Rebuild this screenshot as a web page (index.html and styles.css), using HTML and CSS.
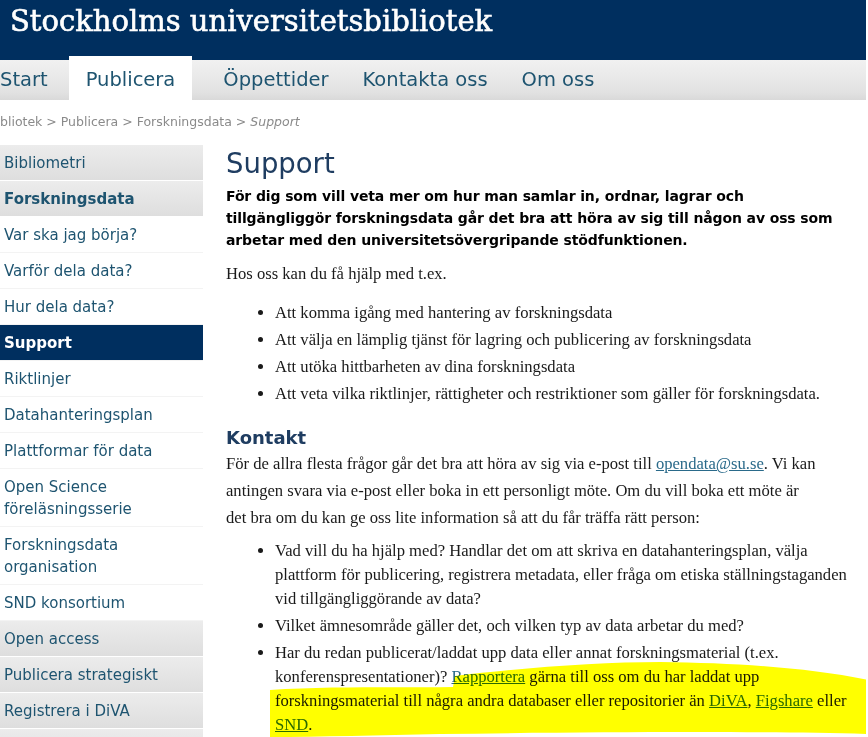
FILE: index.html
```html
<!DOCTYPE html>
<html lang="sv">

<head>
    <meta charset="UTF-8">
    <meta name="viewport" content="width=device-width, initial-scale=1.0">
    <title>Support - Stockholms universitetsbibliotek</title>
    <link rel="stylesheet" href="styles.css">
</head>

<body>
    <div class="page">
        <header class="masthead">
            <div class="site-title">Stockholms universitetsbibliotek</div>
        </header>

        <nav class="topnav">
            <a href="#" class="topnav-item">Start</a>
            <a href="#" class="topnav-item current">Publicera</a>
            <a href="#" class="topnav-item">Öppettider</a>
            <a href="#" class="topnav-item">Kontakta oss</a>
            <a href="#" class="topnav-item">Om oss</a>
        </nav>

        <div class="crumbs">
            <a href="#">bliotek</a> &gt; <a href="#">Publicera</a> &gt; <a href="#">Forskningsdata</a> &gt; <em>Support</em>
        </div>

        <div class="layout">
            <aside class="sidenav">
                <a href="#" class="side-item top">Bibliometri</a>
                <a href="#" class="side-item top open">Forskningsdata</a>
                <a href="#" class="side-item">Var ska jag börja?</a>
                <a href="#" class="side-item">Varför dela data?</a>
                <a href="#" class="side-item">Hur dela data?</a>
                <a href="#" class="side-item active">Support</a>
                <a href="#" class="side-item">Riktlinjer</a>
                <a href="#" class="side-item">Datahanteringsplan</a>
                <a href="#" class="side-item">Plattformar för data</a>
                <a href="#" class="side-item">Open Science föreläsningsserie</a>
                <a href="#" class="side-item">Forskningsdata organisation</a>
                <a href="#" class="side-item">SND konsortium</a>
                <a href="#" class="side-item top">Open access</a>
                <a href="#" class="side-item top">Publicera strategiskt</a>
                <a href="#" class="side-item top">Registrera i DiVA</a>
                <a href="#" class="side-item top">Upphovsrätt</a>
            </aside>

            <main class="content">
                <h1>Support</h1>
                <p class="lead">För dig som vill veta mer om hur man samlar in, ordnar, lagrar och<br>tillgängliggör forskningsdata går det bra att höra av sig till någon av oss som<br>arbetar med den universitetsövergripande stödfunktionen.</p>

                <p>Hos oss kan du få hjälp med t.ex.</p>
                <ul>
                    <li>Att komma igång med hantering av forskningsdata</li>
                    <li>Att välja en lämplig tjänst för lagring och publicering av forskningsdata</li>
                    <li>Att utöka hittbarheten av dina forskningsdata</li>
                    <li>Att veta vilka riktlinjer, rättigheter och restriktioner som gäller för forskningsdata.</li>
                </ul>

                <h2>Kontakt</h2>
                <p>För de allra flesta frågor går det bra att höra av sig via e-post till <a href="#">opendata@su.se</a>. Vi kan<br>antingen svara via e-post eller boka in ett personligt möte. Om du vill boka ett möte är<br>det bra om du kan ge oss lite information så att du får träffa rätt person:</p>
                <ul class="questions">
                    <li>Vad vill du ha hjälp med? Handlar det om att skriva en datahanteringsplan, välja<br>plattform för publicering, registrera metadata, eller fråga om etiska ställningstaganden<br>vid tillgängliggörande av data?</li>
                    <li>Vilket ämnesområde gäller det, och vilken typ av data arbetar du med?</li>
                    <li>Har du redan publicerat/laddat upp data eller annat forskningsmaterial (t.ex.<br>konferenspresentationer)? <a href="#">Rapportera</a> gärna till oss om du har laddat upp<br>forskningsmaterial till några andra databaser eller repositorier än <a href="#">DiVA</a>, <a href="#">Figshare</a> eller<br><a href="#">SND</a>.</li>
                </ul>
            </main>
        </div>

        <!-- yellow marker stroke someone drew over the last item -->
        <svg class="marker" width="868" height="737" viewBox="0 0 868 737">
            <path d="M270 690 C 330 686, 400 688, 453 687 L 455 676 C 520 668, 600 662, 660 662 C 740 663, 810 668, 868 680 L 868 734 C 760 731, 600 732, 440 734 C 380 735, 320 737, 270 737 Z" fill="#ffff00" />
        </svg>
    </div>
</body>

</html>
```

FILE: styles.css
```css
body {
    margin: 0;
    padding: 0;
    background-color: #fff;
    font-family: "Liberation Serif", serif;
    overflow: hidden;
}

.page {
    position: relative;
    width: 866px;
    height: 737px;
    overflow: hidden;
}

.masthead {
    background-color: #002f5f;
    height: 60px;
}

.site-title {
    font-family: "DejaVu Serif", serif;
    font-size: 29px;
    color: #fff;
    -webkit-text-stroke: 0.6px #fff;
    padding: 3px 0 0 10px;
    line-height: 36px;
}

.topnav {
    display: flex;
    height: 40px;
    background: linear-gradient(to bottom, #f1f1f1, #e2e2e2 80%, #d9d9d9);
    font-family: "DejaVu Sans", sans-serif;
    font-size: 19.5px;
}

.topnav-item {
    display: block;
    color: #1e5470;
    text-decoration: none;
    line-height: 40px;
    padding: 0 17px;
}

.topnav-item:first-child {
    padding-left: 0;
    padding-right: 21px;
}

.topnav-item.current {
    background-color: #fff;
    margin-top: -4px;
    padding: 4px 17px 0 17px;
    margin-right: 14px;
}

.crumbs {
    font-family: "DejaVu Sans", sans-serif;
    font-size: 12.5px;
    color: #8a8a8a;
    padding: 14px 0 0 0;
    height: 32px;
    box-sizing: border-box;
}

.crumbs a {
    color: #8a8a8a;
    text-decoration: none;
}

.layout {
    display: flex;
    margin-top: 13px;
}

.sidenav {
    width: 203px;
    flex-shrink: 0;
    display: flex;
    flex-direction: column;
}

.side-item {
    display: block;
    font-family: "DejaVu Sans", sans-serif;
    font-size: 15px;
    line-height: 22px;
    padding: 7px 4px 6px 4px;
    color: #1e5470;
    text-decoration: none;
    border-bottom: 1px solid #f3f3f3;
}

.side-item.top {
    background: linear-gradient(to bottom, #ececec, #dedede);
    border-bottom: 1px solid #fff;
}

.side-item.open {
    font-weight: bold;
}

.side-item.active {
    background-color: #002f5f;
    color: #fff;
    font-weight: bold;
}

.content {
    padding-left: 23px;
    color: #1a1a1a;
    font-size: 16.6px;
    white-space: nowrap;
}

.content h1 {
    font-family: "DejaVu Sans", sans-serif;
    font-weight: normal;
    font-size: 27.5px;
    color: #1f3d61;
    margin: 1px 0 0 0;
    line-height: 34px;
}

.content p {
    line-height: 27px;
    margin: 0;
}

.content .lead {
    font-family: "DejaVu Sans", sans-serif;
    font-weight: bold;
    font-size: 14px;
    letter-spacing: -0.12px;
    line-height: 22px;
    color: #000;
    margin: 5px 0 9px 0;
}

.content h2 {
    font-family: "DejaVu Sans", sans-serif;
    font-size: 18px;
    color: #1f3d61;
    margin: 21px 0 1px 0;
    line-height: 22px;
}

.content ul {
    margin: 14px 0 0 0;
    padding-left: 49px;
}

.content ul.questions {
    margin-top: 8px;
}

.content li {
    line-height: 24px;
    margin-bottom: 3px;
}

.content a {
    color: #2a6a8a;
}

.marker {
    position: absolute;
    left: 0;
    top: 0;
    mix-blend-mode: multiply;
    pointer-events: none;
}
```
